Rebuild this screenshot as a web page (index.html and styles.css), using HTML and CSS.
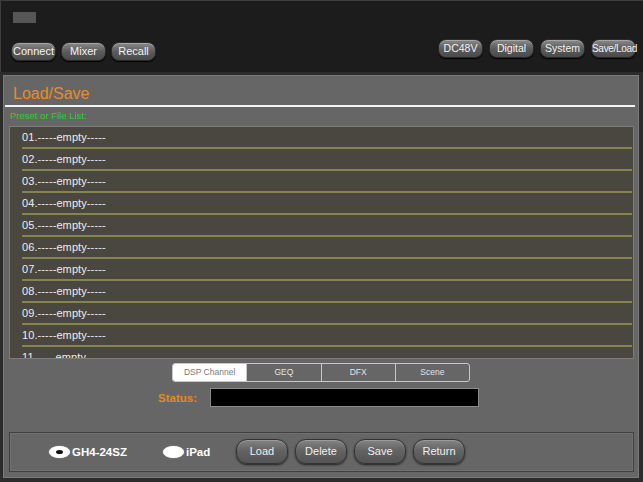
FILE: index.html
```html
<!DOCTYPE html>
<html>
<head>
<meta charset="utf-8">
<link rel="stylesheet" href="styles.css">
</head>
<body>
<header class="topbar">
  <div class="logo-box"></div>
  <div class="nav">
    <div class="nav-left">
      <button class="tbtn">Connect</button>
      <button class="tbtn">Mixer</button>
      <button class="tbtn">Recall</button>
    </div>
    <div class="nav-right">
      <button class="tbtn">DC48V</button>
      <button class="tbtn">Digital</button>
      <button class="tbtn">System</button>
      <button class="tbtn small">Save/Load</button>
    </div>
  </div>
</header>
<main class="panel">
  <h1 class="title">Load/Save</h1>
  <div class="rule"></div>
  <div class="list-label">Preset or File List:</div>
  <div class="list">
    <div class="row">01.-----empty-----</div>
    <div class="row">02.-----empty-----</div>
    <div class="row">03.-----empty-----</div>
    <div class="row">04.-----empty-----</div>
    <div class="row">05.-----empty-----</div>
    <div class="row">06.-----empty-----</div>
    <div class="row">07.-----empty-----</div>
    <div class="row">08.-----empty-----</div>
    <div class="row">09.-----empty-----</div>
    <div class="row">10.-----empty-----</div>
    <div class="row">11.-----empty-----</div>
  </div>
  <div class="tabs">
    <div class="tab active">DSP Channel</div>
    <div class="tab">GEQ</div>
    <div class="tab">DFX</div>
    <div class="tab">Scene</div>
  </div>
  <div class="status-row">
    <span class="status-label">Status:</span>
    <div class="status-box"></div>
  </div>
  <div class="actions">
    <div class="radio-group g1"><span class="radio checked"></span><span class="radio-text">GH4-24SZ</span></div>
    <div class="radio-group g2"><span class="radio"></span><span class="radio-text">iPad</span></div>
    <button class="bbtn">Load</button>
    <button class="bbtn">Delete</button>
    <button class="bbtn">Save</button>
    <button class="bbtn">Return</button>
  </div>
</main>
</body>
</html>
```

FILE: styles.css
```css
* { box-sizing: border-box; }
html, body { margin: 0; padding: 0; }
body {
  width: 643px;
  height: 482px;
  background: #2c2c2c;
  font-family: "Liberation Sans", Arial, sans-serif;
  overflow: hidden;
}
.topbar {
  height: 72px;
  background: #1c1c1c;
  border-top: 1px solid #3e3e3e;
  border-left: 1px solid #3e3e3e;
  padding: 11px 7px 0 10px;
}
.logo-box {
  width: 23px;
  height: 11px;
  background: #565656;
  margin-left: 2px;
}
.nav {
  display: flex;
  justify-content: space-between;
  margin-top: 16px;
}
.nav-left, .nav-right { display: flex; gap: 6px; }
.nav-left { margin-top: 3px; gap: 5px; }
.tbtn {
  width: 45px;
  height: 19px;
  padding: 0;
  border-radius: 8px;
  border: 1px solid #2a2a2a;
  background: linear-gradient(#8a8a8a, #5c5c5c 50%, #4a4a4a);
  box-shadow: inset 0 1px 0 rgba(255,255,255,0.25), 0 1px 1px #000;
  color: #f2f2f2;
  font-family: "Liberation Sans", Arial, sans-serif;
  font-size: 11px;
  line-height: 17px;
  text-align: center;
  white-space: nowrap;
}
.nav-right .tbtn { font-size: 10.5px; }
.nav-right .tbtn.small { font-size: 10px; letter-spacing: -0.3px; }
.panel {
  margin: 3px 4px 0 3px;
  height: 403px;
  background: #666666;
  border: 1px solid #7a7a7a;
  display: flex;
  flex-direction: column;
}
.title {
  margin: 0;
  padding: 8px 0 0 9px;
  height: 29px;
  font-size: 16px;
  line-height: 20px;
  font-weight: normal;
  color: #ea8a2e;
}
.rule {
  height: 2px;
  background: #f4f4f4;
  margin: 0 3px 0 1px;
}
.list-label {
  margin: 3px 0 0 6px;
  font-size: 9.5px;
  line-height: 12px;
  color: #33cc33;
}
.list {
  margin: 4px 0 0 5px;
  width: 625px;
  height: 233px;
  background: #4a4741;
  border: 1px solid #7c7c7c;
  overflow: hidden;
}
.row {
  height: 22px;
  margin-left: 12px;
  margin-right: 1px;
  border-bottom: 2px solid #86844e;
  color: #ececec;
  font-size: 11px;
  line-height: 20px;
  letter-spacing: 0.1px;
}
.tabs {
  align-self: center;
  margin-top: 4px;
  width: 298px;
  height: 19px;
  display: flex;
  border: 1px solid #c8c8c8;
  border-radius: 3px;
  overflow: hidden;
}
.tab {
  flex: 1;
  text-align: center;
  font-size: 8.5px;
  line-height: 17px;
  color: #e4e4e4;
  border-left: 1px solid #c8c8c8;
}
.tab:first-child { border-left: none; }
.tab.active { background: #ffffff; color: #7a7a7a; }
.status-row {
  display: flex;
  align-items: center;
  margin-top: 6px;
  padding-left: 146px;
  gap: 13px;
}
.status-label {
  width: 47px;
  text-align: right;
  color: #e8862a;
  font-weight: bold;
  font-size: 11.5px;
}
.status-box {
  width: 269px;
  height: 19px;
  background: #000;
  border: 1px solid #8a8a8a;
}
.actions {
  margin: 25px 0 0 5px;
  width: 625px;
  height: 40px;
  border: 1px solid #404040;
  box-shadow: inset 0 0 0 1px #707070;
  display: flex;
  align-items: center;
  padding-left: 39px;
}
.radio-group { display: flex; align-items: center; gap: 2px; }
.g1 { width: 114px; }
.g2 { width: 73px; }
.radio {
  width: 21px;
  height: 12px;
  border-radius: 50%;
  background: #ffffff;
  box-shadow: 0 0 1px #ddd;
  display: flex;
  align-items: center;
  justify-content: center;
}
.radio.checked::after {
  content: "";
  width: 7px;
  height: 4px;
  border-radius: 50%;
  background: #111;
}
.radio-text {
  color: #ffffff;
  font-weight: bold;
  font-size: 11.5px;
}
.bbtn {
  width: 52px;
  height: 25px;
  margin: -2px 7px 0 0;
  padding: 0;
  border-radius: 11px;
  border: 1px solid #333;
  background: linear-gradient(#848484, #636363 45%, #545454);
  box-shadow: inset 0 1px 0 rgba(255,255,255,0.2), 0 1px 2px #222;
  color: #f0f0f0;
  font-family: "Liberation Sans", Arial, sans-serif;
  font-size: 11px;
  text-align: center;
}
```
